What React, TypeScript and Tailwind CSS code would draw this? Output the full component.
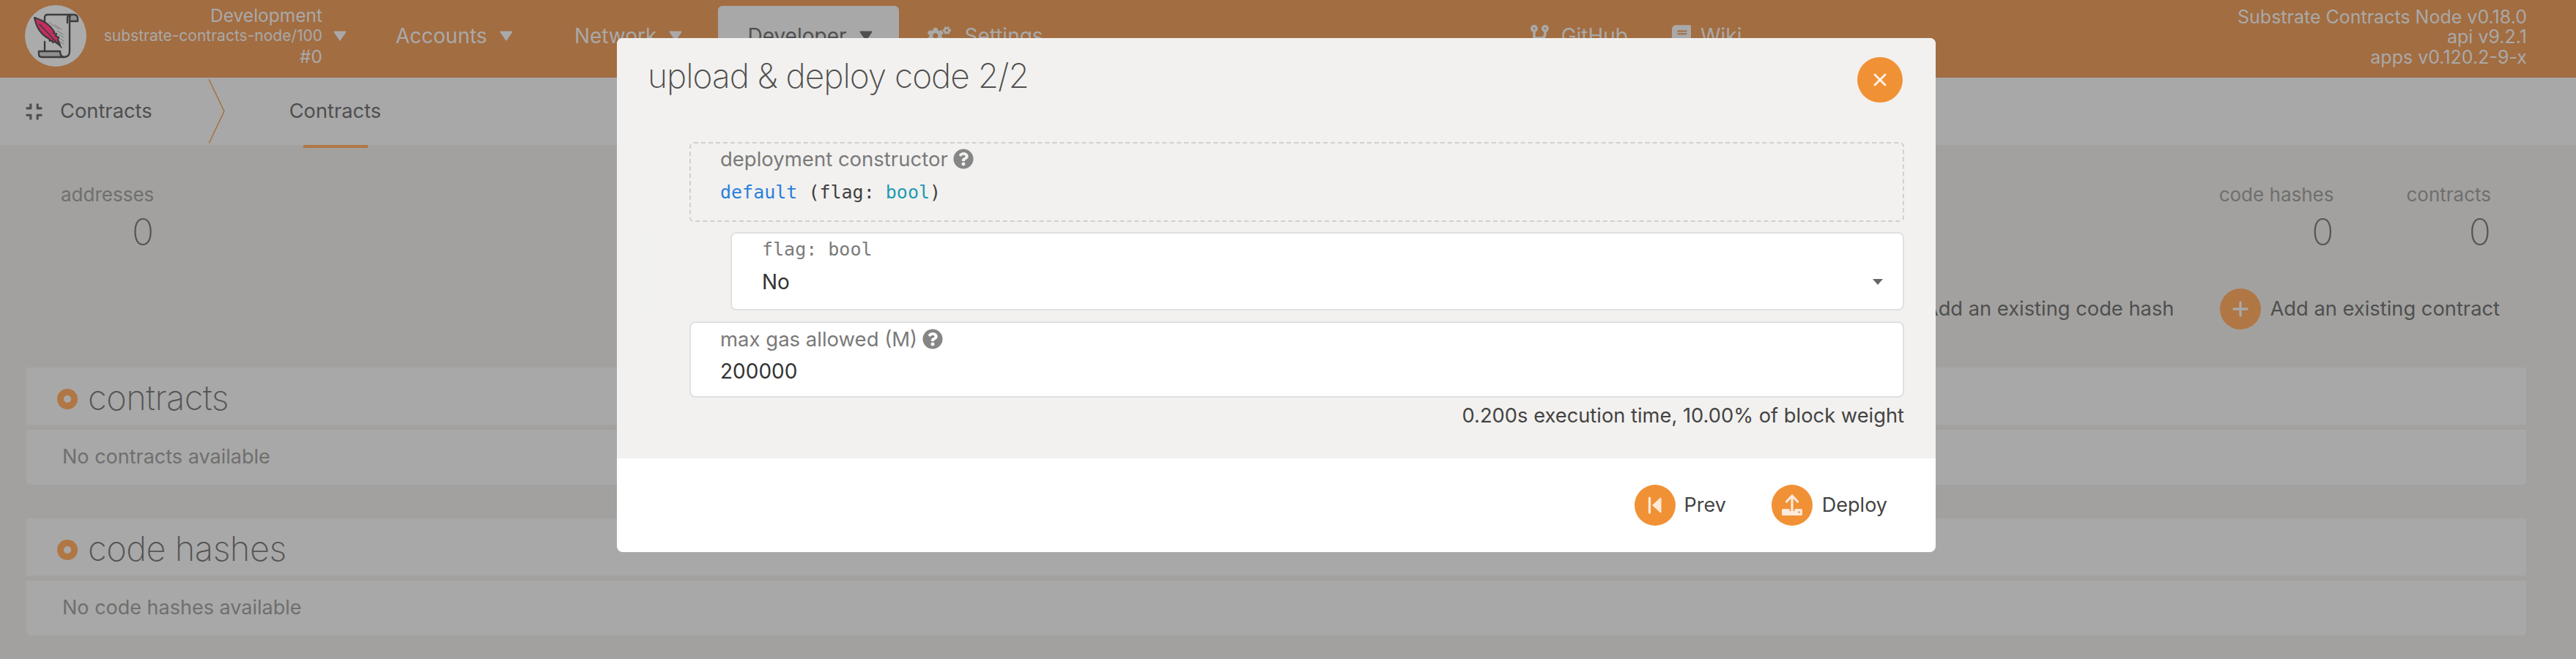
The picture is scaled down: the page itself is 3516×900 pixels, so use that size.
import { FaBook, FaCogs, FaCompress, FaQuestionCircle } from "react-icons/fa";

const sans = "font-['Inter','Liberation_Sans',sans-serif]";
const mono = "font-['DejaVu_Sans_Mono','Liberation_Mono',monospace]";

function Caret({ className }: { className: string }) {
  return (
    <svg viewBox="0 0 18 18" className={`h-[18px] w-[18px] ${className}`}>
      <path d="M1.5 2.5h15a1 1 0 0 1 .8 1.6l-7.5 11a1 1 0 0 1-1.6 0l-7.5-11a1 1 0 0 1 .8-1.6z" fill="currentColor" />
    </svg>
  );
}

function Logo() {
  return (
    <div className="h-[84px] w-[84px] shrink-0 rounded-full bg-[#ababab]">
      <svg viewBox="0 0 84 84" className="h-[84px] w-[84px]" fill="none" strokeLinejoin="round" strokeLinecap="round">
        <path d="M27 40V17q0-4 4-4h33" stroke="#3c3c3c" strokeWidth="2.4" />
        <path d="M27 50v13" stroke="#3c3c3c" strokeWidth="2.4" />
        <path d="M61 13q-3 1-3 5v6M61 24v39q0 8-8 8" stroke="#3c3c3c" strokeWidth="2.4" />
        <path d="M61 22h11v-4q0-5-5-5h-3q-3 0-3 5z" fill="#8f8f8f" stroke="#3c3c3c" strokeWidth="2.4" />
        <path d="M23 71q-4 0-4-4v-4h29q0 8 6 8z" fill="#8f8f8f" stroke="#3c3c3c" strokeWidth="2.4" />
        <path d="M33 24l14 9M41 27l9 6M44 35l8 5M46 40l7 4M47 45l6 4M48 50l5 3" stroke="#7c7c7c" strokeWidth="1" />
        <path d="M13 17q19 6 27 19l-1 2 4 1-1 3 4 2-1 3 3 8-7-5-3 1-1-3-3 1-1-3q-16-8-20-29z" fill="#c42e5f" stroke="#3c3c3c" strokeWidth="2.2" />
        <path d="M20 26l30 32" stroke="#3c3c3c" strokeWidth="1.6" />
      </svg>
    </div>
  );
}

function BranchIcon() {
  return (
    <svg viewBox="0 0 25 30" className="h-[30px] w-[25px]" fill="none" stroke="currentColor" strokeWidth="3.6">
      <circle cx="5" cy="5" r="3.2" />
      <circle cx="20" cy="5" r="3.2" />
      <path d="M5 9v21M20 9v3q0 6-6 6H5" />
    </svg>
  );
}

function NavItem({ label, caret }: { label: string; caret?: boolean }) {
  return (
    <div className="flex items-center gap-[17px] text-[28px] text-[#a9a9a9]">
      <span>{label}</span>
      {caret && <Caret className="text-[#a9a9a9]" />}
    </div>
  );
}

function Stat({ label, className }: { label: string; className: string }) {
  return (
    <div className={`flex flex-col items-end ${className}`}>
      <div className="text-[26px] leading-[32px] text-[#6f6f6e]">{label}</div>
      <div className="mt-[6px] text-[50px] font-extralight leading-[58px] text-[#555]">0</div>
    </div>
  );
}

function AddButton({ label }: { label: string }) {
  return (
    <div className="flex items-center gap-[12px]">
      <div className="flex h-[56px] w-[56px] items-center justify-center rounded-full bg-[#b07745]">
        <svg viewBox="0 0 22 22" className="h-[22px] w-[22px]" stroke="#a8a8a8" strokeWidth="3.4" strokeLinecap="round">
          <path d="M11 2v18M2 11h18" />
        </svg>
      </div>
      <span className="text-[27.3px] text-[#4f4f4f]">{label}</span>
    </div>
  );
}

function Section({ title, empty, mt }: { title: string; empty: string; mt: string }) {
  return (
    <div className={`ml-[36px] w-[3412px] ${mt}`}>
      <div className="flex h-[78px] items-center bg-[#a8a8a8] pl-[42px] pt-[4px]">
        <div className="mt-[4px] flex h-[28px] w-[28px] items-center justify-center rounded-full bg-[#b07745]">
          <div className="h-[10px] w-[10px] rounded-full bg-[#a8a8a8]" />
        </div>
        <div className="ml-[14px] text-[47px] font-extralight leading-[56px] tracking-[-0.5px] text-[#555]">{title}</div>
      </div>
      <div className="mt-[7px] flex h-[75px] items-center rounded-b-[6px] bg-[#a8a8a8] pl-[49px] text-[27px] text-[#6f6f6e]">
        {empty}
      </div>
    </div>
  );
}

export default function App() {
  return (
    <div className={`relative h-[900px] w-[3516px] overflow-hidden bg-[#a2a19f] ${sans}`}>
      <header className="flex h-[106px] items-center bg-[#a26d41] pb-[8px]">
        <div className="ml-[34px]">
          <Logo />
        </div>
        <div className="ml-[25px] flex w-[297px] flex-col items-end text-[#a9a9a9]">
          <div className="text-[24.5px] leading-[28px]">Development</div>
          <div className="whitespace-nowrap text-[21px] leading-[28px]">substrate-contracts-node/100</div>
          <div className="text-[24.5px] leading-[28px]">#0</div>
        </div>
        <Caret className="ml-[15px] text-[#a9a9a9]" />
        <div className="ml-[67px]">
          <NavItem label="Accounts" caret />
        </div>
        <div className="ml-[84px]">
          <NavItem label="Network" caret />
        </div>
        <div className="-mb-[8px] ml-[49px] flex h-[98px] w-[247px] items-center gap-[17px] self-end rounded-t-[6px] bg-[#a8a8a8] pb-[16px] pl-[40px] text-[28px] text-[#4f4f4f]">
          <span>Developer</span>
          <Caret className="text-[#4f4f4f]" />
        </div>
        <div className="ml-[39px] flex items-center gap-[18px] text-[28px] text-[#a9a9a9]">
          <FaCogs className="h-[28px] w-[32px]" />
          <span>Settings</span>
        </div>
        <div className="ml-[665px] flex items-center gap-[17px] text-[28px] text-[#a9a9a9]">
          <BranchIcon />
          <span>GitHub</span>
        </div>
        <div className="ml-[60px] flex items-center gap-[13px] text-[28px] text-[#a9a9a9]">
          <FaBook className="h-[30px] w-[26px]" />
          <span>Wiki</span>
        </div>
        <div className="ml-auto mr-[67px] mt-[4px] text-right text-[25px] leading-[27.5px] text-[#a9a9a9]">
          <div>Substrate Contracts Node v0.18.0</div>
          <div>api v9.2.1</div>
          <div>apps v0.120.2-9-x</div>
        </div>
      </header>

      <nav className="flex h-[92px] items-center bg-[#a8a8a8] text-[27.3px] text-[#4f4f4f]">
        <FaCompress className="ml-[34px] h-[25px] w-[25px]" />
        <span className="ml-[23px]">Contracts</span>
        <svg viewBox="0 0 22 92" className="ml-[77px] h-[92px] w-[22px]" fill="none">
          <path d="M0 2L21 46L0 90" stroke="#a9713f" strokeWidth="1.5" />
        </svg>
        <div className="relative ml-[88px] flex h-full items-center">
          <span>Contracts</span>
          <div className="absolute -bottom-[4px] left-[19px] h-[4px] w-[88px] bg-[#b07745]" />
        </div>
      </nav>

      <div className="flex pt-[52px]">
        <Stat label="addresses" className="ml-[83px]" />
        <Stat label="code hashes" className="ml-auto" />
        <Stat label="contracts" className="ml-[99px] mr-[116px]" />
      </div>

      <div className="mt-[48px] flex justify-end gap-[63px] pr-[104px]">
        <AddButton label="Add an existing code hash" />
        <AddButton label="Add an existing contract" />
      </div>

      <Section title="contracts" empty="No contracts available" mt="mt-[52px]" />
      <Section title="code hashes" empty="No code hashes available" mt="mt-[46px]" />

      <div className="absolute left-[842px] top-[52px] flex h-[702px] w-[1800px] flex-col overflow-hidden rounded-[8px] bg-white">
        <div className="flex-1 bg-[#f2f1ef]">
          <div className="flex items-start justify-between pl-[42px] pr-[45px] pt-[26px]">
            <h1 className="-mt-[6px] text-[46px] font-extralight leading-[62px] tracking-[-1px] text-[#4e4e4e]">upload &amp; deploy code 2/2</h1>
            <button className="flex h-[62px] w-[62px] items-center justify-center rounded-full bg-[#f19135]">
              <svg viewBox="0 0 18 18" className="h-[18px] w-[18px]" stroke="#fdf5ec" strokeWidth="2.8" strokeLinecap="round">
                <path d="M2 2l14 14M16 2L2 16" />
              </svg>
            </button>
          </div>

          <div className="ml-[99px] mr-[43px] mt-[54px] h-[109px] rounded-[6px] border-2 border-dashed border-[#d0d0d0] pl-[40px] pt-[3px]">
            <div className="flex items-center gap-[7px] text-[27.5px] leading-[36px] text-[#7a7a7a]">
              <span>deployment constructor</span>
              <FaQuestionCircle className="h-[28px] w-[28px] text-[#868686]" />
            </div>
            <div className={`mt-[10px] text-[25px] leading-[36px] text-[#3f3f3f] ${mono}`}>
              <span className="text-[#2b7fdb]">default</span> (flag: <span className="text-[#1f9cb0]">bool</span>)
            </div>
          </div>

          <div className="ml-[41px] mr-[43px] mt-[14px] flex items-center">
            <div className="-my-[7px] h-[120px] w-[7px] bg-[#f0f1f1]" />
            <div className="ml-[107px] h-[107px] flex-1 rounded-[8px] border-2 border-[#e0e0e0] bg-white pl-[41px] pr-[27px] pt-[4px]">
              <div className={`text-[25px] leading-[36px] text-[#7a7a7a] ${mono}`}>flag: bool</div>
              <div className="mt-[8px] flex items-center justify-between">
                <span className="text-[28px] leading-[36px] text-[#333]">No</span>
                <svg viewBox="0 0 14 8" className="h-[8px] w-[14px]">
                  <path d="M0 0h14L7 8z" fill="#666" />
                </svg>
              </div>
            </div>
          </div>

          <div className="ml-[99px] mr-[43px] mt-[15px] h-[104px] rounded-[8px] border-2 border-[#e0e0e0] bg-white pl-[40px] pt-[4px]">
            <div className="flex items-center gap-[7px] text-[27.5px] leading-[36px] text-[#7a7a7a]">
              <span>max gas allowed (M)</span>
              <FaQuestionCircle className="h-[28px] w-[28px] text-[#868686]" />
            </div>
            <div className="mt-[8px] text-[28px] leading-[36px] text-[#333]">200000</div>
          </div>

          <div className="mr-[43px] mt-[8px] text-right text-[27.3px] leading-[34px] text-[#444]">
            0.200s execution time, 10.00% of block weight
          </div>
        </div>

        <div className="flex h-[128px] shrink-0 items-center justify-end pr-[66px] text-[27px] text-[#444]">
          <div className="flex items-center gap-[12px]">
            <svg viewBox="0 0 56 56" className="h-[56px] w-[56px]">
              <circle cx="28" cy="28" r="28" fill="#f19135" />
              <path d="M20.5 18v20" stroke="#fdeadb" strokeWidth="3.2" strokeLinecap="round" />
              <path d="M24 28l11-10a1 1 0 0 1 1.5.8v18.4a1 1 0 0 1-1.5.8z" fill="#fdeadb" />
            </svg>
            <span>Prev</span>
          </div>
          <div className="ml-[62px] flex items-center gap-[13px]">
            <svg viewBox="0 0 56 56" className="h-[56px] w-[56px]">
              <circle cx="28" cy="28" r="28" fill="#f19135" />
              <rect x="14" y="33" width="28" height="9" rx="1.5" fill="#fdeadb" />
              <path d="M28 14v22" stroke="#f19135" strokeWidth="7" />
              <path d="M28 15v21M20.5 23L28 15l7.5 8" fill="none" stroke="#fdeadb" strokeWidth="3.2" strokeLinecap="round" strokeLinejoin="round" />
              <circle cx="37.5" cy="37.5" r="1.3" fill="#f19135" />
            </svg>
            <span>Deploy</span>
          </div>
        </div>
      </div>
    </div>
  );
}
